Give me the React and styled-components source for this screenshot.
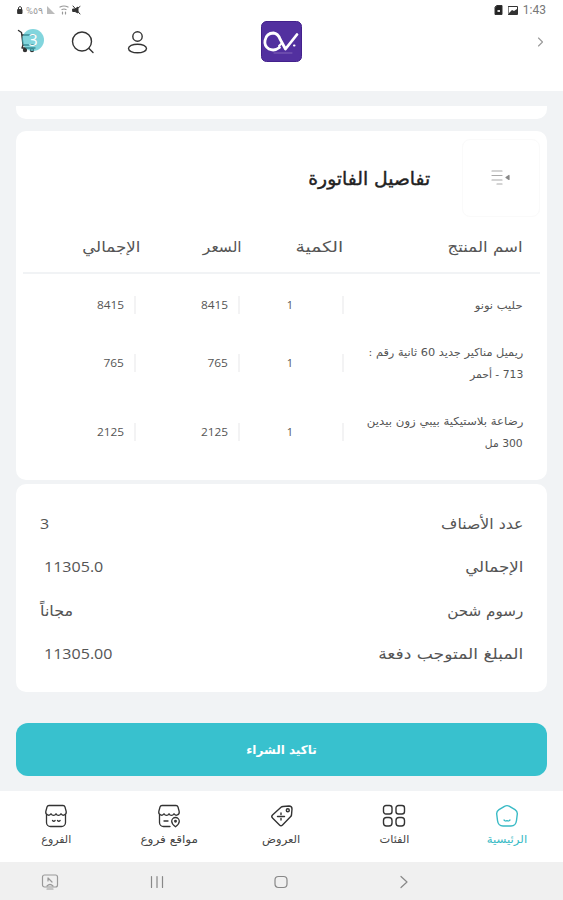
import React from "react";
import styled, { createGlobalStyle } from "styled-components";

const GlobalStyle = createGlobalStyle`
    * {
        box-sizing:border-box;
    }
    body {
        margin:0;
        background-color:#f1f3f5;
        font-family:"DejaVu Sans", "Open Sans", sans-serif;
        color:#555;
    }
`;

const Screen = styled.div`
    width:563px;
    height:900px;
    display:flex;
    flex-direction:column;
    overflow:hidden;
`;

const Icon = styled.svg`
    display:block;
    flex-shrink:0;
    fill:none;
    stroke:${props => props.$color || "#333"};
    stroke-width:${props => props.$weight || 1.4};
    stroke-linecap:round;
    stroke-linejoin:round;
`;

const StatusBar = styled.div`
    height:20px;
    padding:0 17px 0 17px;
    display:flex;
    align-items:center;
    justify-content:space-between;
    background-color:white;
`;

const StatusGroup = styled.div`
    display:flex;
    align-items:center;
    gap:${props => props.$gap}px;
`;

const StatusText = styled.span`
    font-family:Roboto, "DejaVu Sans", sans-serif;
    font-size:${props => props.$size || 12}px;
    color:${props => props.$color || "#777"};
`;

const Header = styled.header`
    height:71px;
    padding:0 17px 28px;
    display:grid;
    grid-template-columns:1fr auto 1fr;
    align-items:center;
    background-color:white;
`;

const Actions = styled.div`
    display:flex;
    align-items:center;
    gap:26px;
`;

const Cart = styled.div`
    position:relative;
    width:28px;
    height:26px;
`;

const CartBadge = styled.span`
    position:absolute;
    top:0;
    left:5px;
    width:22px;
    height:22px;
    border-radius:50%;
    background-color:rgba(63, 190, 203, .65);
    color:white;
    font-family:"Open Sans", sans-serif;
    font-size:16px;
    line-height:22px;
    text-align:center;
`;

const Profile = styled.div`
    margin-left:4px;
`;

const Next = styled.div`
    justify-self:end;
`;

const Content = styled.main`
    height:700px;
    padding:0 16px;
    direction:rtl;
`;

const Card = styled.section`
    background-color:white;
    border-radius:10px;
`;

const ClippedCard = styled(Card)`
    height:13px;
    margin:15px 0 12px;
    border-radius:0 0 10px 10px;
`;

const Invoice = styled(Card)`
    height:349px;
    padding:8px 7px 0;
`;

const InvoiceTop = styled.div`
    height:78px;
    display:flex;
    align-items:center;
    gap:32px;
`;

const IconTile = styled.div`
    width:78px;
    height:78px;
    display:flex;
    align-items:center;
    justify-content:center;
    border:1px solid #fafafa;
    border-radius:8px;
`;

const Label = styled.span`
    display:inline-block;
    white-space:nowrap;
    font-size:${props => props.$size || 15}px;
    transform:scaleX(${props => props.$stretch || 1});
    transform-origin:${props => props.$origin || "right"} center;
`;

const Title = styled.h2`
    margin:0;
    padding-bottom:3px;
    font-weight:400;
    color:#222;
    -webkit-text-stroke:.4px #222;
`;

const TableHead = styled.div`
    height:57px;
    padding:4px 17px 0;
    display:grid;
    grid-template-columns:180px 101px 102px 1fr;
    align-items:center;
    justify-items:start;
    border-bottom:2px solid #f1f3f5;
`;

const Product = styled.div`
    height:${props => props.$height}px;
    padding:0 17px;
    display:grid;
    grid-template-columns:179px 104px 104px 1fr;
    align-items:center;
    line-height:22px;
`;

const Lines = styled.div`
    padding-top:1px;
    display:flex;
    flex-direction:column;
    align-items:flex-start;
`;

const Cell = styled.div`
    height:18px;
    padding-right:${props => props.$inset || 10}px;
    border-right:2px solid #f3f3f4;
    display:flex;
    align-items:center;
    font-family:"Open Sans", sans-serif;
`;

const Summary = styled(Card)`
    height:208px;
    margin-top:4px;
    padding:18px 24px 16px;
`;

const SummaryRow = styled.div`
    height:43.5px;
    display:flex;
    align-items:center;
    justify-content:space-between;
`;

const Amount = styled.span`
    padding:0 0 2px ${props => props.$inset || 0}px;
    font-family:"Open Sans", "DejaVu Sans", sans-serif;
`;

const Confirm = styled.button`
    display:block;
    width:100%;
    height:53px;
    margin-top:31px;
    padding:0;
    border:0;
    border-radius:12px;
    background-color:#38c1ce;
    color:white;
    font-family:"DejaVu Sans", sans-serif;
    font-size:12px;
    font-weight:700;
`;

const Tabs = styled.nav`
    height:71px;
    padding-top:13px;
    display:grid;
    grid-template-columns:repeat(5, 1fr);
    background-color:white;
    direction:rtl;
`;

const Tab = styled.div`
    display:flex;
    flex-direction:column;
    align-items:center;
    gap:4px;
    line-height:16px;
    color:${props => props.$active ? "#38bac5" : "#444"};
`;

const SystemBar = styled.div`
    height:38px;
    padding-top:2px;
    display:grid;
    grid-template-columns:100px 114px 134px 112px;
    align-items:center;
    justify-items:center;
    background-color:#f0f0f0;
`;

const products = [
    {
        lines: [{ text: "حليب نونو", stretch: 1.05 }],
        count: "1",
        price: "8415",
        height: 62
    },
    {
        lines: [
            { text: "ريميل مناكير جديد 60 ثانية رقم :", stretch: 1.03 },
            { text: "713 - أحمر", stretch: 0.98 }
        ],
        count: "1",
        price: "765",
        height: 54
    },
    {
        lines: [
            { text: "رضاعة بلاستيكية بيبي زون بيدين", stretch: 1.07 },
            { text: "300 مل", stretch: 0.98 }
        ],
        count: "1",
        price: "2125",
        height: 84
    }
];

const columns = [
    { name: "اسم المنتج", stretch: 1.11 },
    { name: "الكمية", stretch: 1.25 },
    { name: "السعر", stretch: 1.03 },
    { name: "الإجمالي", stretch: 1.11 }
];

const totals = [
    { name: "عدد الأصناف", stretch: 1.05, value: "3" },
    { name: "الإجمالي", stretch: 1.11, value: "11305.0", inset: 4 },
    { name: "رسوم شحن", stretch: 1.01, value: "مجاناً" },
    { name: "المبلغ المتوجب دفعة", stretch: 1.14, value: "11305.00", inset: 4 }
];

const Shop = ({ pin }) => (
    <Icon width="24" height="24" viewBox="0 0 24 24" $weight={1.3}>
        <path d="M5 1.500h14q1.500 0 2 1.500l1.200 4.500c.6 3.500-3.700 5-5.200 2.300-1.200 2.200-4 2.200-5 0-1 2.200-3.800 2.200-5 0C5.500 12.500 1.200 11 1.800 7.500L3 3q.5-1.500 2-1.500z" />
        {pin ? (
            <>
                <path d="M2.500 11v7.500a4 4 0 0 0 4 4H13M7 17h4" />
                <path d="M18.500 22.800s-3.800-2.800-3.800-5.500a3.800 3.800 0 0 1 7.600 0c0 2.700-3.800 5.500-3.800 5.500z" />
                <circle cx="18.500" cy="17.300" r=".8" />
            </>
        ) : (
            <path d="M2.500 11v7.500a4 4 0 0 0 4 4h11a4 4 0 0 0 4-4V11M8.500 16.500q1.300 1.500 2.600 0M13.500 16.500q1.300 1.500 2.600 0" />
        )}
    </Icon>
);

const tabs = [
    {
        name: "الرئيسية",
        stretch: 1.07,
        active: true,
        icon: (
            <Icon width="24" height="24" viewBox="0 0 24 24" $color="#38bac5">
                <path d="M9.500 2.300q2.500-1.300 5 0l5.500 3.400q2.500 1.600 2.300 4.300l-.8 6.500q-.7 5.500-5.500 5.500H8q-4.800 0-5.500-5.500L1.700 10q-.2-2.700 2.300-4.300z" />
                <path d="M9 16q1.500 1.800 3 .5 1.500 1.300 3-.5" strokeWidth="1.200" />
            </Icon>
        )
    },
    {
        name: "الفئات",
        stretch: 1.03,
        icon: (
            <Icon width="24" height="24" viewBox="0 0 24 24">
                <rect x="1.500" y="1.500" width="8.500" height="8.500" rx="2.500" />
                <rect x="14" y="1.500" width="8.500" height="8.500" rx="2.500" />
                <rect x="1.500" y="13.500" width="8.500" height="8.500" rx="3" />
                <rect x="14" y="13.500" width="8.500" height="8.500" rx="3" />
            </Icon>
        )
    },
    {
        name: "العروض",
        stretch: 1.05,
        icon: (
            <Icon width="24" height="24" viewBox="0 0 24 24">
                <path d="M13 2.500l6-.5q3 0 3 3l-.5 6q-.2 1-1 1.800l-8 8.200q-1.500 1.500-3 0l-7-7q-1.500-1.500 0-3l8.500-7.700q.8-.7 2-.8z" />
                <circle cx="17.800" cy="6.200" r="1.500" />
                <path d="M7.500 12.500h7M11 9v1.500M11 14.500V16" />
            </Icon>
        )
    },
    { name: "مواقع فروع", stretch: 1.1, icon: <Shop pin /> },
    { name: "الفروع", stretch: 1, icon: <Shop /> }
];

export default () => (
    <Screen>
        <GlobalStyle />
        <StatusBar>
            <StatusGroup $gap={3}>
                <Icon width="6" height="10" viewBox="0 0 6 10" $weight={1}>
                    <path d="M1.500 4V2.500q1.500-2 3 0V4" />
                    <path d="M1 4.500h4v4H1z" fill="#333" />
                </Icon>
                <StatusText $size={9.5} $color="#999">%٥٩</StatusText>
                <Icon width="10" height="10" viewBox="0 0 10 10">
                    <path d="M1 1v8h8z" fill="#bbb" stroke="none" />
                </Icon>
                <Icon width="10" height="10" viewBox="0 0 10 10" $color="#999" $weight={1.2}>
                    <path d="M1 2q4-2 8 0M3 4.500q2-1 4 0M3.500 7v2M6.500 7v2" />
                </Icon>
                <Icon width="9" height="10" viewBox="0 0 9 10" $weight={1}>
                    <path d="M1 4h2l3-2v6L3 6.500H1z" fill="#333" />
                    <path d="M1 1l7 8M8 1.500L6 3" />
                </Icon>
            </StatusGroup>
            <StatusGroup $gap={5}>
                <Icon width="9" height="10" viewBox="0 0 9 10" $weight={1}>
                    <path d="M3 .500h5v9H1v-7z" fill="#222" />
                    <path d="M3.500 5h2.500v2H3.500z" fill="#ddd" stroke="none" />
                </Icon>
                <Icon width="10" height="9" viewBox="0 0 10 9" $weight={1}>
                    <path d="M.5.500h9v8h-9z" />
                    <path d="M1 7l3-3 2 1 3-2v5H1z" fill="#333" stroke="none" />
                </Icon>
                <StatusText $size={12}>1:43</StatusText>
            </StatusGroup>
        </StatusBar>
        <Header>
            <Actions>
                <Cart>
                    <Icon width="24" height="24" viewBox="0 0 24 24" $weight={1.4}>
                        <path d="M1.500 1.500l3 2L6 16h12M5 6h13M6 16l-1 3h13" />
                        <circle cx="8" cy="21" r="1.500" fill="#333" />
                        <circle cx="15" cy="21" r="1.500" />
                    </Icon>
                    <CartBadge>3</CartBadge>
                </Cart>
                <Icon width="24" height="24" viewBox="0 0 24 24">
                    <circle cx="11" cy="11.500" r="9.500" />
                    <path d="M18 18.500l4 4" />
                </Icon>
                <Profile>
                    <Icon width="24" height="24" viewBox="0 0 24 24">
                        <circle cx="12.500" cy="6.500" r="4.700" />
                        <ellipse cx="12.500" cy="18.500" rx="9" ry="4.300" />
                    </Icon>
                </Profile>
            </Actions>
            <Icon width="41" height="41" viewBox="0 0 41 41" $color="white" $weight={2.8}>
                <rect x=".5" y=".5" width="40" height="40" rx="5" fill="#52309f" stroke="#43218c" strokeWidth="1" />
                <path d="M18.500 26.500q-5 4-10.500 1.500-5-3-4-8.500Q5.500 12 12.500 12q4.500.5 6.500 6l5.500 10L36 13.500" />
                <path d="M18 25l2-2M33 24.500h.5" strokeWidth="2" />
                <path d="M13 32h18" stroke="#8265b9" strokeWidth="1" />
            </Icon>
            <Next>
                <Icon width="12" height="12" viewBox="0 0 12 12" $color="#999" $weight={1.1}>
                    <path d="M4.500 2l4 4-4 4" />
                </Icon>
            </Next>
        </Header>
        <Content>
            <ClippedCard />
            <Invoice>
                <InvoiceTop>
                    <IconTile>
                        <Icon width="20" height="16" viewBox="0 0 20 16" $color="#aaa" $weight={1.2}>
                            <path d="M1 1h10M1 5.500h10M1 10h10M6 14h5" />
                            <path d="M18 5.500v4l-3-2z" fill="#888" stroke="#888" />
                        </Icon>
                    </IconTile>
                    <Title><Label $size={18} $stretch={1.04}>تفاصيل الفاتورة</Label></Title>
                </InvoiceTop>
                <TableHead>
                    {columns.map(({ name, stretch }) => (
                        <Label key={name} $stretch={stretch}>{name}</Label>
                    ))}
                </TableHead>
                {products.map(({ lines, count, price, height }) => (
                    <Product key={price} $height={height}>
                        <Lines>
                            {lines.map(({ text, stretch }) => (
                                <Label key={text} $size={11} $stretch={stretch}>{text}</Label>
                            ))}
                        </Lines>
                        <Cell $inset={49}><Label $size={11}>{count}</Label></Cell>
                        <Cell><Label $size={11} $stretch={1.08}>{price}</Label></Cell>
                        <Cell><Label $size={11} $stretch={1.08}>{price}</Label></Cell>
                    </Product>
                ))}
            </Invoice>
            <Summary>
                {totals.map(({ name, stretch, value, inset }) => (
                    <SummaryRow key={name}>
                        <Label $stretch={stretch}>{name}</Label>
                        <Amount $inset={inset}>
                            <Label $stretch={1.07} $origin="left">{value}</Label>
                        </Amount>
                    </SummaryRow>
                ))}
            </Summary>
            <Confirm>تاكيد الشراء</Confirm>
        </Content>
        <Tabs>
            {tabs.map(({ name, stretch, icon, active }) => (
                <Tab key={name} $active={active}>
                    {icon}
                    <Label $size={11} $stretch={stretch} $origin="center">{name}</Label>
                </Tab>
            ))}
        </Tabs>
        <SystemBar>
            <Icon width="18" height="16" viewBox="0 0 18 16" $color="#999" $weight={1.2}>
                <rect x="1.500" y="1" width="15" height="12" rx="2" />
                <path d="M7 4l4 4M7 4v3M6 12q3-3 6 0M6 15h6" />
            </Icon>
            <Icon width="14" height="14" viewBox="0 0 14 14" $color="#888" $weight={1.2}>
                <path d="M1.500 1.500v11M7 1.500v11M12.500 1.500v11" />
            </Icon>
            <Icon width="14" height="14" viewBox="0 0 14 14" $color="#888" $weight={1.2}>
                <rect x="1" y="1.500" width="12" height="11" rx="3.500" />
            </Icon>
            <Icon width="14" height="14" viewBox="0 0 14 14" $color="#888" $weight={1.2}>
                <path d="M4 1.500L10 7l-6 5.500" />
            </Icon>
        </SystemBar>
    </Screen>
);
